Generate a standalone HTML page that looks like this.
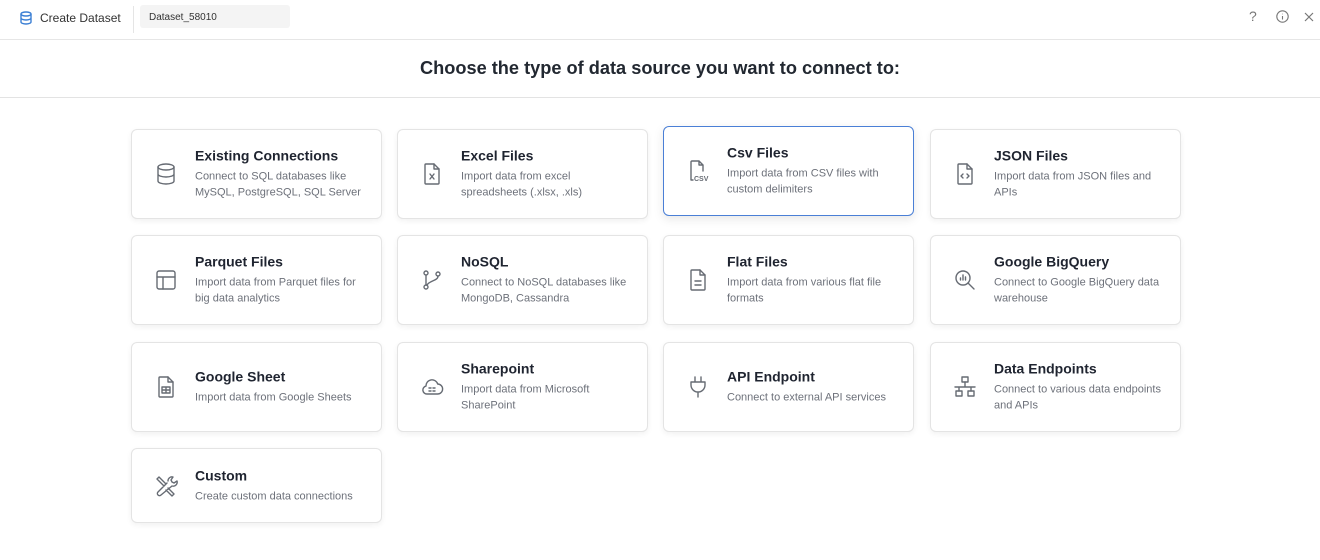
<!DOCTYPE html>
<html><head><meta charset="utf-8"><style>
*{box-sizing:border-box;margin:0;padding:0}
body{width:1320px;height:560px;background:#fff;font-family:"Liberation Sans",Arial,sans-serif;position:relative;overflow:hidden;color:#1f2430}
.hdr{position:absolute;left:0;top:0;width:1320px;height:40px;border-bottom:1px solid #e6e6e6}
.ttl{position:absolute;left:0;top:58px;width:1320px;text-align:center;font-size:18.2px;font-weight:bold;color:#222831}
.line{position:absolute;left:0;top:97px;width:1320px;height:1px;background:#e3e3e3}
.card{position:absolute;width:251px;height:90px;border:1px solid #e4e4e4;border-radius:6px;background:#fff;box-shadow:0 2px 6px rgba(0,0,0,.06)}
.card.sel{border-color:#4a7fd6;box-shadow:0 3px 10px rgba(0,0,0,.1)}
.card svg{position:absolute;left:22px;top:50%;margin-top:-12px;width:24px;height:24px;fill:none;stroke:#666b73;stroke-width:1.4;stroke-linecap:round;stroke-linejoin:round}
.tx{position:absolute;left:63px;top:50%;transform:translateY(-50%);width:170px}
.tx b{display:block;font-size:14px;color:#1f2430;margin-bottom:5px}
.tx span{display:block;font-size:11px;line-height:16px;color:#6d717a}
</style></head><body>
<div class="hdr">
<svg style="position:absolute;left:20px;top:11px" width="12" height="14" viewBox="0 0 12 14" fill="none" stroke="#3b7fd4" stroke-width="1.4"><ellipse cx="6" cy="3" rx="5" ry="2"/><path d="M1 3v8c0 1.1 2.2 2 5 2s5-.9 5-2V3M1 7c0 1.1 2.2 2 5 2s5-.9 5-2"/></svg>
<div style="position:absolute;left:40px;top:11px;font-size:12px;color:#333">Create Dataset</div>
<div style="position:absolute;left:133px;top:6px;width:1px;height:27px;background:#e5e5e5"></div>
<div style="position:absolute;left:140px;top:5px;width:150px;height:23px;background:#f4f4f4;border-radius:3px;font-size:10px;color:#333;padding:7px 0 0 9px">Dataset_58010</div>
<div style="position:absolute;left:1249px;top:8px;font-size:14px;color:#777">?</div>
<svg style="position:absolute;left:1276px;top:10px" width="13" height="13" viewBox="0 0 13 13" fill="none" stroke="#777" stroke-width="1.1"><circle cx="6.5" cy="6.5" r="5.7"/><path d="M6.5 6v3.5M6.5 3.8v.4"/></svg>
<svg style="position:absolute;left:1304px;top:12px" width="10" height="10" viewBox="0 0 10 10" stroke="#777" stroke-width="1.2"><path d="M1 1l8 8M9 1l-8 8"/></svg>
</div>
<div class="ttl">Choose the type of data source you want to connect to:</div>
<div class="line"></div>

<div class="card" style="left:131px;top:129px"><svg viewBox="0 0 24 24"><ellipse cx="12" cy="5" rx="8" ry="3"/><path d="M4 5v14c0 1.7 3.6 3 8 3s8-1.3 8-3V5M4 12c0 1.7 3.6 3 8 3s8-1.3 8-3"/></svg><div class="tx"><b>Existing Connections</b><span>Connect to SQL databases like MySQL, PostgreSQL, SQL Server</span></div></div>
<div class="card" style="left:397px;top:129px"><svg viewBox="0 0 24 24"><path d="M14 2H6a1 1 0 0 0-1 1v18a1 1 0 0 0 1 1h12a1 1 0 0 0 1-1V7z"/><path d="M14 2v5h5M10 12l4 5M14 12l-4 5"/></svg><div class="tx"><b>Excel Files</b><span>Import data from excel spreadsheets (.xlsx, .xls)</span></div></div>
<div class="card sel" style="left:663px;top:126px"><svg viewBox="0 0 24 24"><path d="M5 21V3a1 1 0 0 1 1-1h7l4 4v6M5 21h2M13 2v4h4"/><text x="8" y="22" font-size="7" font-weight="bold" fill="#666b73" stroke="none" font-family="Liberation Sans">CSV</text></svg><div class="tx"><b>Csv Files</b><span>Import data from CSV files with custom delimiters</span></div></div>
<div class="card" style="left:930px;top:129px"><svg viewBox="0 0 24 24"><path d="M14 2H6a1 1 0 0 0-1 1v18a1 1 0 0 0 1 1h12a1 1 0 0 0 1-1V7z"/><path d="M14 2v5h5M10 12l-2 2 2 2M14 12l2 2-2 2"/></svg><div class="tx"><b>JSON Files</b><span>Import data from JSON files and APIs</span></div></div>

<div class="card" style="left:131px;top:235px"><svg viewBox="0 0 24 24"><rect x="3" y="3" width="18" height="18" rx="2"/><path d="M3 9h18M9 9v12"/></svg><div class="tx"><b>Parquet Files</b><span>Import data from Parquet files for big data analytics</span></div></div>
<div class="card" style="left:397px;top:235px"><svg viewBox="0 0 24 24"><circle cx="6" cy="5" r="2"/><circle cx="6" cy="19" r="2"/><circle cx="18" cy="6" r="2"/><path d="M6 7v10M18 8c0 5-8 4-11 9"/></svg><div class="tx"><b>NoSQL</b><span>Connect to NoSQL databases like MongoDB, Cassandra</span></div></div>
<div class="card" style="left:663px;top:235px"><svg viewBox="0 0 24 24"><path d="M14 2H6a1 1 0 0 0-1 1v18a1 1 0 0 0 1 1h12a1 1 0 0 0 1-1V7z"/><path d="M14 2v5h5M9 13h6M9 17h6"/></svg><div class="tx"><b>Flat Files</b><span>Import data from various flat file formats</span></div></div>
<div class="card" style="left:930px;top:235px"><svg viewBox="0 0 24 24"><circle cx="10" cy="10" r="7"/><path d="M15 15l6 6M7.5 12v-2M10 12V7M12.5 12V9"/></svg><div class="tx"><b>Google BigQuery</b><span>Connect to Google BigQuery data warehouse</span></div></div>

<div class="card" style="left:131px;top:342px"><svg viewBox="0 0 24 24"><path d="M14 2H6a1 1 0 0 0-1 1v18a1 1 0 0 0 1 1h12a1 1 0 0 0 1-1V7z"/><path d="M14 2v5h5M8 12h8v6H8zM8 15h8M12 12v6"/></svg><div class="tx"><b>Google Sheet</b><span>Import data from Google Sheets</span></div></div>
<div class="card" style="left:397px;top:342px"><svg viewBox="0 0 24 24"><path d="M7 19a4 4 0 0 1-1-7.9A6 6 0 0 1 17.7 9 4.5 4.5 0 0 1 17.5 19z"/><path d="M9 13h2M13 13h2M9 16h2M13 16h2"/></svg><div class="tx"><b>Sharepoint</b><span>Import data from Microsoft SharePoint</span></div></div>
<div class="card" style="left:663px;top:342px"><svg viewBox="0 0 24 24"><path d="M9 2v5M15 2v5M5 7h14v3a7 7 0 0 1-14 0zM12 17v5"/></svg><div class="tx"><b>API Endpoint</b><span>Connect to external API services</span></div></div>
<div class="card" style="left:930px;top:342px"><svg viewBox="0 0 24 24"><rect x="9" y="2" width="6" height="5"/><rect x="3" y="16" width="6" height="5"/><rect x="15" y="16" width="6" height="5"/><path d="M12 7v5M2 12h20M6 12v4M18 12v4"/></svg><div class="tx"><b>Data Endpoints</b><span>Connect to various data endpoints and APIs</span></div></div>

<div class="card" style="left:131px;top:448px;height:75px"><svg viewBox="0 0 24 24"><path d="M3 5l2-2 7 7-2 2zM14 14l6 6-2 2-6-6M14 7a4 4 0 0 1 5-4l-2 3 1 2 2 1 3-2a4 4 0 0 1-5 5L7 21a2 2 0 0 1-3-3l9-9"/></svg><div class="tx"><b>Custom</b><span>Create custom data connections</span></div></div>
</body></html>
